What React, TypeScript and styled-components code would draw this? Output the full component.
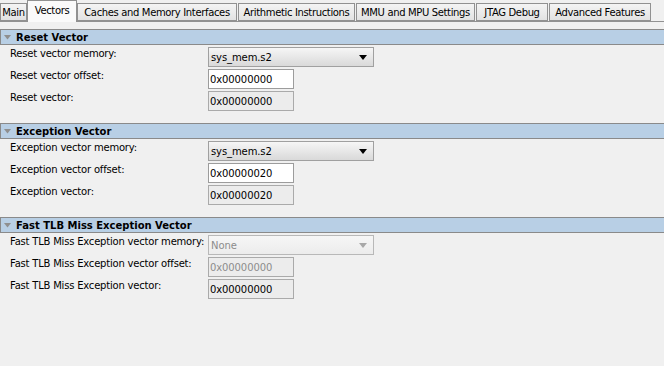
import React from "react";
import styled, { createGlobalStyle } from "styled-components";

const Global = createGlobalStyle`
  html, body { margin: 0; padding: 0; background: #f0f0f0; }
  body { font-family: "DejaVu Sans", Tahoma, sans-serif; font-size: 10px; color: #000; }
`;

const Page = styled.div`
  width: 664px;
  height: 366px;
  overflow: hidden;
  background: #f0f0f0;
`;

const TabBar = styled.div`
  display: flex;
  align-items: flex-end;
  height: 21px;
  border-bottom: 1px solid #919191;
  box-sizing: content-box;
`;

const Tab = styled.div<{ $active?: boolean; $w: number; $gap: number }>`
  box-sizing: border-box;
  width: ${(p) => p.$w}px;
  flex: none;
  display: flex;
  justify-content: center;
  height: ${(p) => (p.$active ? "22px" : "18px")};
  margin-bottom: ${(p) => (p.$active ? "-1px" : "0")};
  margin-right: ${(p) => p.$gap}px;
  padding-top: ${(p) => (p.$active ? "3px" : "2px")};
  border: 1px solid #919191;
  border-bottom: ${(p) => (p.$active ? "none" : "1px solid #919191")};
  background: ${(p) => (p.$active ? "#fafafa" : "linear-gradient(#f4f4f4, #e2e2e2)")};
  letter-spacing: -0.35px;
  line-height: 13px;
  white-space: nowrap;
  overflow: hidden;
`;

const Body = styled.div`
  padding-top: 7px;
`;

const Section = styled.section`
  margin-bottom: 12px;
`;

const Header = styled.div`
  display: flex;
  align-items: center;
  gap: 5px;
  height: 16px;
  box-sizing: border-box;
  border-top: 1px solid #8a8a8a;
  border-bottom: 1px solid #8a8a8a;
  border-left: 1px solid #8a8a8a;
  background: #b8cfe5;
  padding-left: 3px;
  font-weight: bold;
  font-size: 10px;
`;

const Rows = styled.div`
  display: flex;
  flex-direction: column;
  gap: 2px;
  padding-top: 2px;
`;

const Row = styled.div`
  display: grid;
  grid-template-columns: 198px auto;
  align-items: start;
  height: 20px;
  padding-left: 10px;
`;

const Label = styled.div`
  line-height: 14px;
  letter-spacing: -0.2px;
  white-space: nowrap;
`;

const Combo = styled.div<{ $disabled?: boolean }>`
  box-sizing: border-box;
  width: 166px;
  height: 20px;
  border: 1px solid ${(p) => (p.$disabled ? "#b8b8b8" : "#a0a0a0")};
  background: ${(p) =>
    p.$disabled ? "linear-gradient(#f6f6f6, #ececec)" : "linear-gradient(#f6f6f6, #d9d9d9)"};
  display: flex;
  align-items: center;
  justify-content: space-between;
  padding: 0 6px 0 2px;
  color: ${(p) => (p.$disabled ? "#8c8c8c" : "#000")};
  letter-spacing: -0.1px;
`;

const Field = styled.div<{ $mode?: "edit" | "ro" | "disabled" }>`
  box-sizing: border-box;
  width: 86px;
  height: 20px;
  border: 1px solid ${(p) => (p.$mode === "edit" ? "#9c9c9c" : "#aaaaaa")};
  background: ${(p) => (p.$mode === "edit" ? "#ffffff" : "#ececec")};
  color: ${(p) => (p.$mode === "disabled" ? "#8c8c8c" : "#000")};
  display: flex;
  align-items: center;
  padding: 1px 0 0 1px;
  letter-spacing: -0.1px;
`;

const Arrow = ({ color }: { color: string }) => (
  <svg width="8" height="5" viewBox="0 0 8 5">
    <polygon points="0,0 8,0 4,5" fill={color} />
  </svg>
);

const Caret = () => (
  <svg width="7" height="5" viewBox="0 0 7 5">
    <polygon points="0,0 7,0 3.5,4.5" fill="#8f8f8f" />
  </svg>
);

type RowDef =
  | { kind: "combo"; label: string; value: string; disabled?: boolean }
  | { kind: "field"; label: string; value: string; mode: "edit" | "ro" | "disabled" };

const sections: { title: string; rows: RowDef[] }[] = [
  {
    title: "Reset Vector",
    rows: [
      { kind: "combo", label: "Reset vector memory:", value: "sys_mem.s2" },
      { kind: "field", label: "Reset vector offset:", value: "0x00000000", mode: "edit" },
      { kind: "field", label: "Reset vector:", value: "0x00000000", mode: "ro" },
    ],
  },
  {
    title: "Exception Vector",
    rows: [
      { kind: "combo", label: "Exception vector memory:", value: "sys_mem.s2" },
      { kind: "field", label: "Exception vector offset:", value: "0x00000020", mode: "edit" },
      { kind: "field", label: "Exception vector:", value: "0x00000020", mode: "ro" },
    ],
  },
  {
    title: "Fast TLB Miss Exception Vector",
    rows: [
      { kind: "combo", label: "Fast TLB Miss Exception vector memory:", value: "None", disabled: true },
      { kind: "field", label: "Fast TLB Miss Exception vector offset:", value: "0x00000000", mode: "disabled" },
      { kind: "field", label: "Fast TLB Miss Exception vector:", value: "0x00000000", mode: "ro" },
    ],
  },
];

const tabs: { label: string; w: number; gap: number }[] = [
  { label: "Main", w: 27, gap: 0 },
  { label: "Vectors", w: 50, gap: 0 },
  { label: "Caches and Memory Interfaces", w: 160, gap: 1 },
  { label: "Arithmetic Instructions", w: 117, gap: 1 },
  { label: "MMU and MPU Settings", w: 119, gap: 1 },
  { label: "JTAG Debug", w: 72, gap: 1 },
  { label: "Advanced Features", w: 102, gap: 0 },
];

export default function App() {
  return (
    <Page>
      <Global />
      <TabBar>
        {tabs.map((t) => (
          <Tab key={t.label} $active={t.label === "Vectors"} $w={t.w} $gap={t.gap}>
            {t.label}
          </Tab>
        ))}
      </TabBar>
      <Body>
        {sections.map((s) => (
          <Section key={s.title}>
            <Header>
              <Caret />
              <span>{s.title}</span>
            </Header>
            <Rows>
              {s.rows.map((r) => (
                <Row key={r.label}>
                  <Label>{r.label}</Label>
                  {r.kind === "combo" ? (
                    <Combo $disabled={r.disabled}>
                      <span>{r.value}</span>
                      <Arrow color={r.disabled ? "#a8a8a8" : "#000"} />
                    </Combo>
                  ) : (
                    <Field $mode={r.mode}>{r.value}</Field>
                  )}
                </Row>
              ))}
            </Rows>
          </Section>
        ))}
      </Body>
    </Page>
  );
}
